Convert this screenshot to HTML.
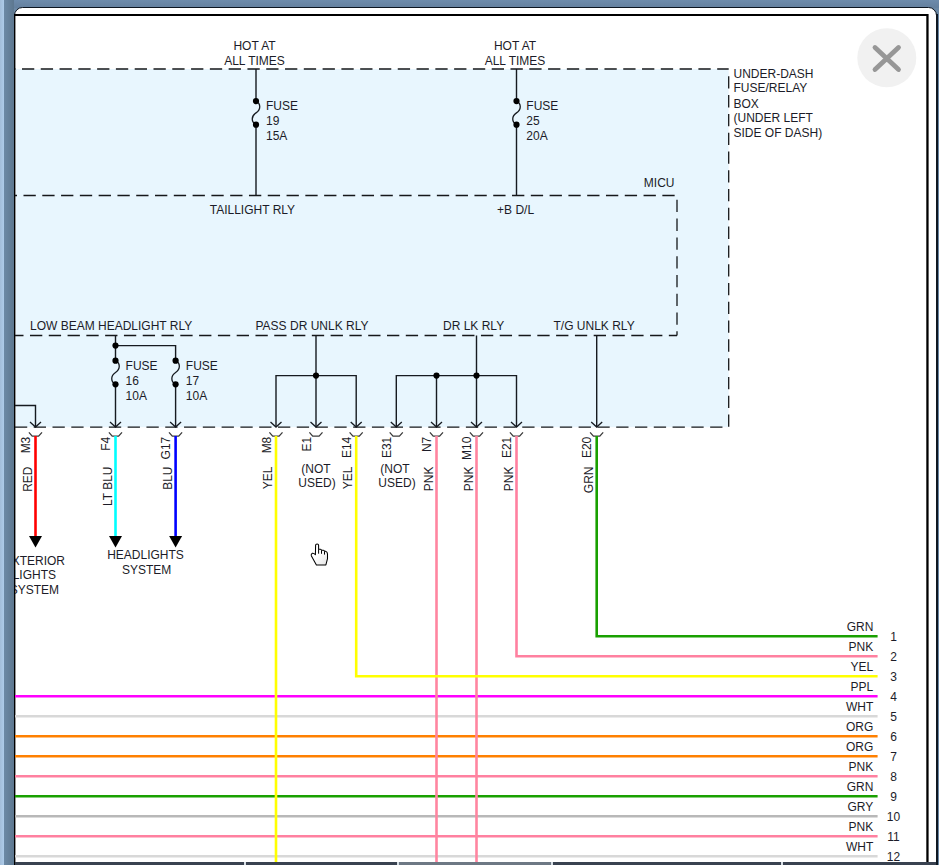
<!DOCTYPE html><html><head><meta charset="utf-8"><style>html,body{margin:0;padding:0;width:939px;height:865px;overflow:hidden;background:#6a87a4}svg{display:block}</style></head><body>
<svg width="939" height="865" viewBox="0 0 939 865">
<rect x="0" y="0" width="939" height="865" fill="#6a87a4"/>
<defs><linearGradient id="lg1" x1="0" x2="1" y1="0" y2="0"><stop offset="0" stop-color="#a2bdd9"/><stop offset="1" stop-color="#adcbe9"/></linearGradient><linearGradient id="lg2" x1="0" x2="1" y1="0" y2="0"><stop offset="0" stop-color="#6c89a5"/><stop offset="1" stop-color="#5d778f"/></linearGradient><linearGradient id="lg3" x1="0" x2="0" y1="0" y2="1"><stop offset="0" stop-color="#6d8bab"/><stop offset="1" stop-color="#64809e"/></linearGradient></defs>
<rect x="0" y="0" width="939" height="8" fill="url(#lg3)"/>
<rect x="0" y="0" width="4" height="865" fill="url(#lg1)"/>
<rect x="4" y="0" width="10" height="865" fill="url(#lg2)"/>
<rect x="14.5" y="7.5" width="922" height="900" rx="8" ry="8" fill="#fff" stroke="#0c1520" stroke-width="1"/>
<defs><clipPath id="c"><rect x="15" y="16" width="911" height="846"/></clipPath></defs>
<g clip-path="url(#c)">
<rect x="15" y="16" width="911" height="846" fill="#fff"/>
<rect x="16" y="69" width="712.7" height="358.2" fill="#e8f6fe"/>
</g>
<rect x="14" y="14" width="914" height="2" fill="#000"/>
<rect x="14" y="14" width="1.4" height="851" fill="#000"/>
<rect x="926.3" y="14" width="2.3" height="851" fill="#000"/>
<g clip-path="url(#c)">
<line x1="3.17" y1="69" x2="728.7" y2="69" stroke="#15171a" stroke-width="1.3" stroke-dasharray="12.3 6.49"/>
<line x1="728.7" y1="76.3" x2="728.7" y2="427.2" stroke="#15171a" stroke-width="1.3" stroke-dasharray="12.3 6.49"/>
<line x1="14.92" y1="427.2" x2="728.7" y2="427.2" stroke="#15171a" stroke-width="1.3" stroke-dasharray="12.3 6.49"/>
<line x1="4.7" y1="195.5" x2="677" y2="195.5" stroke="#15171a" stroke-width="1.3" stroke-dasharray="12.3 6.49"/>
<line x1="677" y1="199.8" x2="677" y2="335.5" stroke="#15171a" stroke-width="1.3" stroke-dasharray="12.3 6.49"/>
<line x1="11.2" y1="335.5" x2="677" y2="335.5" stroke="#15171a" stroke-width="1.3" stroke-dasharray="12.3 6.49"/>
<path d="M256,69 V101.1 M256,124.7 V195" fill="none" stroke="#161a20" stroke-width="1.4"/>
<path d="M256,101.1 C261,103.6 261,109.6 256,112.90 C251,116.20 251,122.20 256,124.70" fill="none" stroke="#161a20" stroke-width="1.3"/>
<circle cx="256" cy="101.1" r="3.1" fill="#000"/>
<circle cx="256" cy="124.69999999999999" r="3.1" fill="#000"/>
<path d="M516.5,69 V101.1 M516.5,124.7 V195" fill="none" stroke="#161a20" stroke-width="1.4"/>
<path d="M516.5,101.1 C521.5,103.6 521.5,109.6 516.5,112.90 C511.5,116.20 511.5,122.20 516.5,124.70" fill="none" stroke="#161a20" stroke-width="1.3"/>
<circle cx="516.5" cy="101.1" r="3.1" fill="#000"/>
<circle cx="516.5" cy="124.69999999999999" r="3.1" fill="#000"/>
<path d="M115.5,335.5 V360.7 M115.5,384.3 V427 M115.5,345.6 H175.6 V360.7 M175.6,384.3 V427" fill="none" stroke="#161a20" stroke-width="1.4"/>
<circle cx="115.5" cy="345.6" r="3.1" fill="#000"/>
<path d="M115.5,360.7 C120.5,363.2 120.5,369.2 115.5,372.50 C110.5,375.80 110.5,381.80 115.5,384.30" fill="none" stroke="#161a20" stroke-width="1.3"/>
<circle cx="115.5" cy="360.7" r="3.1" fill="#000"/>
<circle cx="115.5" cy="384.3" r="3.1" fill="#000"/>
<path d="M175.6,360.7 C180.6,363.2 180.6,369.2 175.6,372.50 C170.6,375.80 170.6,381.80 175.6,384.30" fill="none" stroke="#161a20" stroke-width="1.3"/>
<circle cx="175.6" cy="360.7" r="3.1" fill="#000"/>
<circle cx="175.6" cy="384.3" r="3.1" fill="#000"/>
<path d="M110.0,422 L115.5,427 L121.0,422" fill="none" stroke="#161a20" stroke-width="1.3"/>
<path d="M170.1,422 L175.6,427 L181.1,422" fill="none" stroke="#161a20" stroke-width="1.3"/>
<path d="M15,405.5 H35.5 V427" fill="none" stroke="#161a20" stroke-width="1.4"/>
<path d="M30.0,422 L35.5,427 L41.0,422" fill="none" stroke="#161a20" stroke-width="1.3"/>
<path d="M316,335.5 V427 M276,427 V375.6 H356.2 V427" fill="none" stroke="#161a20" stroke-width="1.4"/>
<circle cx="316" cy="375.6" r="3.1" fill="#000"/>
<path d="M270.5,422 L276,427 L281.5,422" fill="none" stroke="#161a20" stroke-width="1.3"/>
<path d="M310.5,422 L316,427 L321.5,422" fill="none" stroke="#161a20" stroke-width="1.3"/>
<path d="M350.7,422 L356.2,427 L361.7,422" fill="none" stroke="#161a20" stroke-width="1.3"/>
<path d="M476.5,335.5 V427 M396.3,427 V375.6 H516.5 V427 M436.5,375.6 V427" fill="none" stroke="#161a20" stroke-width="1.4"/>
<circle cx="436.5" cy="375.6" r="3.1" fill="#000"/>
<circle cx="476.5" cy="375.6" r="3.1" fill="#000"/>
<path d="M390.8,422 L396.3,427 L401.8,422" fill="none" stroke="#161a20" stroke-width="1.3"/>
<path d="M431.0,422 L436.5,427 L442.0,422" fill="none" stroke="#161a20" stroke-width="1.3"/>
<path d="M471.0,422 L476.5,427 L482.0,422" fill="none" stroke="#161a20" stroke-width="1.3"/>
<path d="M511.0,422 L516.5,427 L522.0,422" fill="none" stroke="#161a20" stroke-width="1.3"/>
<path d="M596.7,335.5 V427" fill="none" stroke="#161a20" stroke-width="1.4"/>
<path d="M591.2,422 L596.7,427 L602.2,422" fill="none" stroke="#161a20" stroke-width="1.3"/>
<path d="M28.9,432.4 L32.2,436.09999999999997 L38.6,436.09999999999997 L42.0,432.4" fill="none" stroke="#3a3a3a" stroke-width="1.3"/>
<path d="M108.9,432.4 L112.2,436.09999999999997 L118.6,436.09999999999997 L122.0,432.4" fill="none" stroke="#3a3a3a" stroke-width="1.3"/>
<path d="M169.0,432.4 L172.29999999999998,436.09999999999997 L178.7,436.09999999999997 L182.1,432.4" fill="none" stroke="#3a3a3a" stroke-width="1.3"/>
<path d="M269.4,432.4 L272.7,436.09999999999997 L279.1,436.09999999999997 L282.5,432.4" fill="none" stroke="#3a3a3a" stroke-width="1.3"/>
<path d="M309.4,432.4 L312.7,436.09999999999997 L319.1,436.09999999999997 L322.5,432.4" fill="none" stroke="#3a3a3a" stroke-width="1.3"/>
<path d="M349.59999999999997,432.4 L352.9,436.09999999999997 L359.3,436.09999999999997 L362.7,432.4" fill="none" stroke="#3a3a3a" stroke-width="1.3"/>
<path d="M389.7,432.4 L393.0,436.09999999999997 L399.40000000000003,436.09999999999997 L402.8,432.4" fill="none" stroke="#3a3a3a" stroke-width="1.3"/>
<path d="M429.9,432.4 L433.2,436.09999999999997 L439.6,436.09999999999997 L443.0,432.4" fill="none" stroke="#3a3a3a" stroke-width="1.3"/>
<path d="M469.9,432.4 L473.2,436.09999999999997 L479.6,436.09999999999997 L483.0,432.4" fill="none" stroke="#3a3a3a" stroke-width="1.3"/>
<path d="M509.9,432.4 L513.2,436.09999999999997 L519.6,436.09999999999997 L523.0,432.4" fill="none" stroke="#3a3a3a" stroke-width="1.3"/>
<path d="M590.1,432.4 L593.4000000000001,436.09999999999997 L599.8000000000001,436.09999999999997 L603.2,432.4" fill="none" stroke="#3a3a3a" stroke-width="1.3"/>
<line x1="15" y1="696.30" x2="877.6" y2="696.30" stroke="#ff00ff" stroke-width="2.6"/>
<line x1="15" y1="716.30" x2="877.6" y2="716.30" stroke="#d8d8d8" stroke-width="2.6"/>
<line x1="15" y1="736.30" x2="877.6" y2="736.30" stroke="#ff8000" stroke-width="2.6"/>
<line x1="15" y1="756.30" x2="877.6" y2="756.30" stroke="#ff8000" stroke-width="2.6"/>
<line x1="15" y1="776.30" x2="877.6" y2="776.30" stroke="#ff80a0" stroke-width="2.6"/>
<line x1="15" y1="796.30" x2="877.6" y2="796.30" stroke="#19a000" stroke-width="2.6"/>
<line x1="15" y1="816.30" x2="877.6" y2="816.30" stroke="#b8b8b8" stroke-width="2.6"/>
<line x1="15" y1="836.30" x2="877.6" y2="836.30" stroke="#ff80a0" stroke-width="2.6"/>
<line x1="15" y1="856.30" x2="877.6" y2="856.30" stroke="#d8d8d8" stroke-width="2.6"/>
<line x1="35.5" y1="436" x2="35.5" y2="536.00" stroke="#ff0000" stroke-width="2.6"/>
<line x1="115.5" y1="436" x2="115.5" y2="536.00" stroke="#00ffff" stroke-width="2.6"/>
<line x1="175.6" y1="436" x2="175.6" y2="536.00" stroke="#0000ff" stroke-width="2.6"/>
<line x1="276" y1="436" x2="276" y2="870.00" stroke="#ffff00" stroke-width="2.6"/>
<line x1="436.5" y1="436" x2="436.5" y2="870.00" stroke="#ff85a0" stroke-width="2.6"/>
<line x1="476.5" y1="436" x2="476.5" y2="870.00" stroke="#ff85a0" stroke-width="2.6"/>
<path d="M596.7,436 V636.30 H877.6" fill="none" stroke="#19a000" stroke-width="2.6" stroke-linejoin="miter"/>
<path d="M516.5,436 V656.30 H877.6" fill="none" stroke="#ff80a0" stroke-width="2.6" stroke-linejoin="miter"/>
<path d="M356.2,436 V676.30 H877.6" fill="none" stroke="#ffff00" stroke-width="2.6" stroke-linejoin="miter"/>
<path d="M29.0,536 H42.0 L35.5,547.5 Z" fill="#000"/>
<path d="M109.0,536 H122.0 L115.5,547.5 Z" fill="#000"/>
<path d="M169.1,536 H182.1 L175.6,547.5 Z" fill="#000"/>
<g font-family="Liberation Sans, sans-serif" font-size="12" fill="#1c1c28">
<text x="254.5" y="50" text-anchor="middle" >HOT AT</text>
<text x="254.5" y="65" text-anchor="middle" >ALL TIMES</text>
<text x="515" y="50" text-anchor="middle" >HOT AT</text>
<text x="515" y="65" text-anchor="middle" >ALL TIMES</text>
<text x="266" y="110" text-anchor="start" >FUSE</text>
<text x="266" y="125" text-anchor="start" >19</text>
<text x="266" y="140" text-anchor="start" >15A</text>
<text x="526.3" y="110" text-anchor="start" >FUSE</text>
<text x="526.3" y="125" text-anchor="start" >25</text>
<text x="526.3" y="140" text-anchor="start" >20A</text>
<text x="733.5" y="78.2" text-anchor="start" >UNDER-DASH</text>
<text x="733.5" y="92.2" text-anchor="start" >FUSE/RELAY</text>
<text x="733.5" y="107.5" text-anchor="start" >BOX</text>
<text x="733.5" y="121.5" text-anchor="start" >(UNDER LEFT</text>
<text x="733.5" y="136.9" text-anchor="start" >SIDE OF DASH)</text>
<text x="674.5" y="186.5" text-anchor="end" >MICU</text>
<text x="252.4" y="213.5" text-anchor="middle" >TAILLIGHT RLY</text>
<text x="515.6" y="213.5" text-anchor="middle" >+B D/L</text>
<text x="30" y="330" text-anchor="start" >LOW BEAM HEADLIGHT RLY</text>
<text x="255.5" y="330" text-anchor="start" >PASS DR UNLK RLY</text>
<text x="443" y="330" text-anchor="start" >DR LK RLY</text>
<text x="553.5" y="330" text-anchor="start" >T/G UNLK RLY</text>
<text x="125.6" y="370" text-anchor="start" >FUSE</text>
<text x="125.6" y="385" text-anchor="start" >16</text>
<text x="125.6" y="400" text-anchor="start" >10A</text>
<text x="185.8" y="370" text-anchor="start" >FUSE</text>
<text x="185.8" y="385" text-anchor="start" >17</text>
<text x="185.8" y="400" text-anchor="start" >10A</text>
<text x="316" y="472.5" text-anchor="middle" >(NOT</text>
<text x="317" y="487" text-anchor="middle" >USED)</text>
<text x="395" y="472.5" text-anchor="middle" >(NOT</text>
<text x="397" y="487" text-anchor="middle" >USED)</text>
<text x="34.3" y="564.5" text-anchor="middle" >EXTERIOR</text>
<text x="34.3" y="579.2" text-anchor="middle" >LIGHTS</text>
<text x="34.3" y="593.9" text-anchor="middle" >SYSTEM</text>
<text x="145.5" y="559.2" text-anchor="middle" >HEADLIGHTS</text>
<text x="146.6" y="574.3" text-anchor="middle" >SYSTEM</text>
<text transform="translate(30.2,436.7) rotate(-90)" text-anchor="end">M3</text>
<text transform="translate(31.7,466.5) rotate(-90)" text-anchor="end">RED</text>
<text transform="translate(110.2,436.7) rotate(-90)" text-anchor="end">F4</text>
<text transform="translate(111.7,466.5) rotate(-90)" text-anchor="end">LT BLU</text>
<text transform="translate(170.3,436.7) rotate(-90)" text-anchor="end">G17</text>
<text transform="translate(171.8,466.5) rotate(-90)" text-anchor="end">BLU</text>
<text transform="translate(270.7,436.7) rotate(-90)" text-anchor="end">M8</text>
<text transform="translate(272.2,466.5) rotate(-90)" text-anchor="end">YEL</text>
<text transform="translate(310.7,436.7) rotate(-90)" text-anchor="end">E1</text>
<text transform="translate(350.9,436.7) rotate(-90)" text-anchor="end">E14</text>
<text transform="translate(352.4,466.5) rotate(-90)" text-anchor="end">YEL</text>
<text transform="translate(391.0,436.7) rotate(-90)" text-anchor="end">E31</text>
<text transform="translate(431.2,436.7) rotate(-90)" text-anchor="end">N7</text>
<text transform="translate(432.7,466.5) rotate(-90)" text-anchor="end">PNK</text>
<text transform="translate(471.2,436.7) rotate(-90)" text-anchor="end">M10</text>
<text transform="translate(472.7,466.5) rotate(-90)" text-anchor="end">PNK</text>
<text transform="translate(511.2,436.7) rotate(-90)" text-anchor="end">E21</text>
<text transform="translate(512.7,466.5) rotate(-90)" text-anchor="end">PNK</text>
<text transform="translate(591.4,436.7) rotate(-90)" text-anchor="end">E20</text>
<text transform="translate(592.9,466.5) rotate(-90)" text-anchor="end">GRN</text>
<text x="873.3" y="630.8" text-anchor="end" >GRN</text>
<text x="893.5" y="640.8" text-anchor="middle" >1</text>
<text x="873.3" y="650.8" text-anchor="end" >PNK</text>
<text x="893.5" y="660.8" text-anchor="middle" >2</text>
<text x="873.3" y="670.8" text-anchor="end" >YEL</text>
<text x="893.5" y="680.8" text-anchor="middle" >3</text>
<text x="873.3" y="690.8" text-anchor="end" >PPL</text>
<text x="893.5" y="700.8" text-anchor="middle" >4</text>
<text x="873.3" y="710.8" text-anchor="end" >WHT</text>
<text x="893.5" y="720.8" text-anchor="middle" >5</text>
<text x="873.3" y="730.8" text-anchor="end" >ORG</text>
<text x="893.5" y="740.8" text-anchor="middle" >6</text>
<text x="873.3" y="750.8" text-anchor="end" >ORG</text>
<text x="893.5" y="760.8" text-anchor="middle" >7</text>
<text x="873.3" y="770.8" text-anchor="end" >PNK</text>
<text x="893.5" y="780.8" text-anchor="middle" >8</text>
<text x="873.3" y="790.8" text-anchor="end" >GRN</text>
<text x="893.5" y="800.8" text-anchor="middle" >9</text>
<text x="873.3" y="810.8" text-anchor="end" >GRY</text>
<text x="893.5" y="820.8" text-anchor="middle" >10</text>
<text x="873.3" y="830.8" text-anchor="end" >PNK</text>
<text x="893.5" y="840.8" text-anchor="middle" >11</text>
<text x="873.3" y="850.8" text-anchor="end" >WHT</text>
<text x="893.5" y="860.8" text-anchor="middle" >12</text>
</g>
</g>
<rect x="15" y="862" width="921" height="3" fill="#394250"/>
<rect x="936" y="14" width="2" height="851" fill="#0e1822"/>
<rect x="399" y="862" width="152" height="3" fill="#6d7884"/>
<rect x="244" y="862" width="2" height="3" fill="#d8e0e6"/>
<rect x="397" y="862" width="2" height="3" fill="#d8e0e6"/>
<rect x="551" y="862" width="2" height="3" fill="#d8e0e6"/>
<rect x="781" y="862" width="2" height="3" fill="#d8e0e6"/>
<circle cx="886.8" cy="57.8" r="29.5" fill="#f1f1f1"/>
<path d="M875,47.5 L898.5,69.5 M898.5,47.5 L875,69.5" stroke="#979797" stroke-width="4.8" stroke-linecap="round"/>
<defs><linearGradient id="hg" x1="0" y1="0" x2="1" y2="1"><stop offset="0.45" stop-color="#ffffff"/><stop offset="1" stop-color="#e4e4e4"/></linearGradient></defs>
<path d="M315.6,545.3 Q315.6,543.9 317.1,543.9 Q318.6,543.9 318.6,545.3 V549.3 H320.4 Q321.4,549.4 321.5,550.3 H323.4 Q324.4,550.4 324.5,551.3 H325.6 Q327.5,551.9 327.5,554 V558.6 L325.9,564.9 H316.4 L311.3,555.7 Q310.8,553.9 312.4,553.3 Q313.7,553 315.4,554.7 Z" fill="url(#hg)" stroke="#000" stroke-width="1.05" stroke-linejoin="round"/>
<path d="M318.6,549.3 V553.7 M321.5,550.3 V553.8 M324.5,551.3 V554.6" fill="none" stroke="#000" stroke-width="1"/>
</svg></body></html>
